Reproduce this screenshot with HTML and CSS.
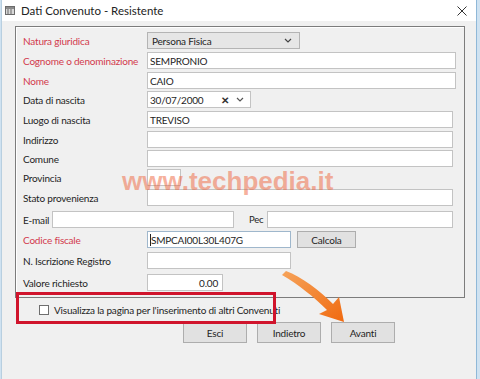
FILE: index.html
```html
<!DOCTYPE html>
<html lang="it">
<head>
  <meta charset="UTF-8">
  <title>Dati Convenuto - Resistente</title>
  <link rel="stylesheet" href="styles.css">
</head>
<body>
  <div class="window">
    <div class="titlebar">
      <svg class="app-icon" width="10" height="9" viewBox="0 0 10 9">
        <rect x="0.5" y="0.5" width="9" height="8" fill="#d8d8d8" stroke="#6b6b6b"/>
        <rect x="1" y="1" width="8" height="2" fill="#8a8a8a"/>
        <line x1="3" y1="3" x2="3" y2="8" stroke="#6b6b6b"/>
        <line x1="6" y1="3" x2="6" y2="8" stroke="#6b6b6b"/>
      </svg>
      <span class="title">Dati Convenuto - Resistente</span>
      <svg class="close" width="10" height="10" viewBox="0 0 10 10">
        <path d="M0.5 0.5 L9.5 9.5 M9.5 0.5 L0.5 9.5" stroke="#333" stroke-width="1"/>
      </svg>
    </div>

    <div class="client">
      <div class="group">
        <div class="form">
          <label class="req">Natura giuridica</label>
          <div class="field"><div class="combo w-combo"><span>Persona Fisica</span>
            <svg width="8" height="5" viewBox="0 0 8 5"><path d="M1 1 L4 4 L7 1" fill="none" stroke="#444" stroke-width="1.2"/></svg></div></div>

          <label class="req">Cognome o denominazione</label>
          <div class="field"><div class="box w-long">SEMPRONIO</div></div>

          <label class="req">Nome</label>
          <div class="field"><div class="box w-long">CAIO</div></div>

          <label>Data di nascita</label>
          <div class="field"><div class="box date"><span>30/07/2000</span>
            <span class="date-x">✕</span>
            <svg width="8" height="5" viewBox="0 0 8 5"><path d="M1 1 L4 4 L7 1" fill="none" stroke="#555" stroke-width="1.2"/></svg></div></div>

          <label>Luogo di nascita</label>
          <div class="field"><div class="box w-mid">TREVISO</div></div>

          <label>Indirizzo</label>
          <div class="field"><div class="box w-mid"></div></div>

          <label>Comune</label>
          <div class="field"><div class="box w-mid"></div></div>

          <label>Provincia</label>
          <div class="field"><div class="box w-prov"></div></div>

          <label>Stato provenienza</label>
          <div class="field"><div class="box w-mid"></div></div>

          <div class="mail-row">
            <label>E-mail</label>
            <div class="box w-mail"></div>
            <label class="pec">Pec</label>
            <div class="box w-pec"></div>
          </div>

          <label class="req">Codice fiscale</label>
          <div class="field"><div class="box w-cf focus"><span class="caret"></span>SMPCAI00L30L407G</div>
            <button class="btn calc">Calcola</button></div>

          <label>N. Iscrizione Registro</label>
          <div class="field"><div class="box w-cf"></div></div>

          <label>Valore richiesto</label>
          <div class="field"><div class="box w-val num">0.00</div></div>
        </div>
      </div>

      <div class="check-row">
        <span class="checkbox"></span>
        <span>Visualizza la pagina per l'inserimento di altri Convenuti</span>
      </div>

      <div class="buttons">
        <button class="btn">Esci</button>
        <button class="btn">Indietro</button>
        <button class="btn">Avanti</button>
      </div>

      <div class="watermark">www.techpedia.it</div>
      <div class="highlight"></div>
      <svg class="arrow" width="80" height="60" viewBox="0 0 80 60">
        <defs>
          <linearGradient id="ag" x1="0" y1="0" x2="1" y2="1">
            <stop offset="0" stop-color="#f6a35a"/>
            <stop offset="1" stop-color="#f06a10"/>
          </linearGradient>
        </defs>
        <path d="M0 4 C17 14 32 26 45 39 L37 43 L62 51 L57 26 L51 33 C37 19 20 6 4 0 Z" fill="url(#ag)"/>
      </svg>
    </div>
  </div>
</body>
</html>
```

FILE: styles.css
```css
* { box-sizing: border-box; }
body {
  margin: 0;
  background: #cfe2f1;
  font-family: Lato, "Noto Sans", sans-serif;
  font-size: 10px;
  letter-spacing: -0.2px;
  color: #1e1e1e;
}
.window {
  width: 476px;
  height: 379px;
  margin-left: 1px;
  background: #f0f0f0;
  border-left: 1px solid #b8cfe0;
  border-right: 1px solid #8fb8d8;
}
.titlebar {
  height: 21px;
  background: #fff;
  display: flex;
  align-items: center;
  padding: 0 9px 0 3px;
}
.app-icon { margin-right: 6px; }
.title {
  flex: 1;
  font-size: 11.5px;
  letter-spacing: 0;
  color: #222;
}
.client {
  position: relative;
  padding: 5px 0 0 13px;
}
.group {
  width: 450px;
  height: 272px;
  border: 1px solid #7c7c7c;
  box-shadow: inset 1px 1px 0 #fff;
  padding: 5px 0 0 7px;
}
.form {
  display: grid;
  grid-template-columns: 124px 1fr;
  grid-template-rows: 20px 20px 19px 20px 20px 19px 19px 20px 22px 20px 21px 22px 17px;
}
.form label {
  display: flex;
  align-items: center;
  height: 17px;
  white-space: nowrap;
}
.req { color: #d23a4c; }
.field {
  display: flex;
  align-items: flex-start;
  gap: 6px;
}
.box {
  height: 17px;
  background: #fff;
  border: 1px solid #c3c3c3;
  padding: 0 2px;
  display: flex;
  align-items: center;
  white-space: nowrap;
}
.w-long { width: 309px; }
.w-mid { width: 306px; }
.w-prov { width: 34px; }
.w-cf { width: 144px; }
.w-val { width: 76px; }
.num { justify-content: flex-end; padding-right: 4px; }
.focus { border-color: #9fb7cc; }
.caret {
  width: 1px;
  height: 12px;
  background: #222;
}
.combo {
  height: 17px;
  background: #e6e6e6;
  border: 1px solid #b4b4b4;
  display: flex;
  align-items: center;
  justify-content: space-between;
  padding: 0 7px 0 4px;
}
.w-combo { width: 153px; }
.date {
  width: 104px;
  padding-right: 6px;
}
.date span:first-child { flex: 1; }
.date-x {
  font-size: 10px;
  font-weight: bold;
  color: #333;
  margin-right: 7px;
}
.mail-row {
  grid-column: 1 / 3;
  display: flex;
  align-items: flex-start;
}
.mail-row label { width: 29px; }
.w-mail { width: 182px; }
.mail-row .pec {
  width: 18px;
  margin-left: 15px;
  font-size: 9.5px;
}
.w-pec { width: 186px; }
.btn {
  height: 17px;
  width: 59px;
  padding: 0;
  font-family: inherit;
  font-size: 10px;
  letter-spacing: -0.2px;
  color: #1e1e1e;
  background: #e1e1e1;
  border: 1px solid #adadad;
}
.check-row {
  height: 24px;
  display: flex;
  align-items: center;
  padding-left: 24px;
  gap: 5px;
}
.checkbox {
  width: 10px;
  height: 10px;
  background: #fff;
  border: 1px solid #6e6e6e;
}
.buttons {
  display: flex;
  gap: 10px;
  padding-left: 168px;
}
.buttons .btn {
  width: 64px;
  height: 21px;
}
.watermark {
  position: absolute;
  left: 120px;
  top: 145px;
  font-family: "Liberation Sans", sans-serif;
  font-weight: bold;
  font-size: 26px;
  letter-spacing: 0;
  color: rgba(238, 100, 60, 0.5);
  pointer-events: none;
}
.highlight {
  position: absolute;
  left: 14px;
  top: 271px;
  width: 260px;
  height: 32px;
  border: 3px solid #d0142c;
}
.arrow {
  position: absolute;
  left: 280px;
  top: 250px;
}
```
